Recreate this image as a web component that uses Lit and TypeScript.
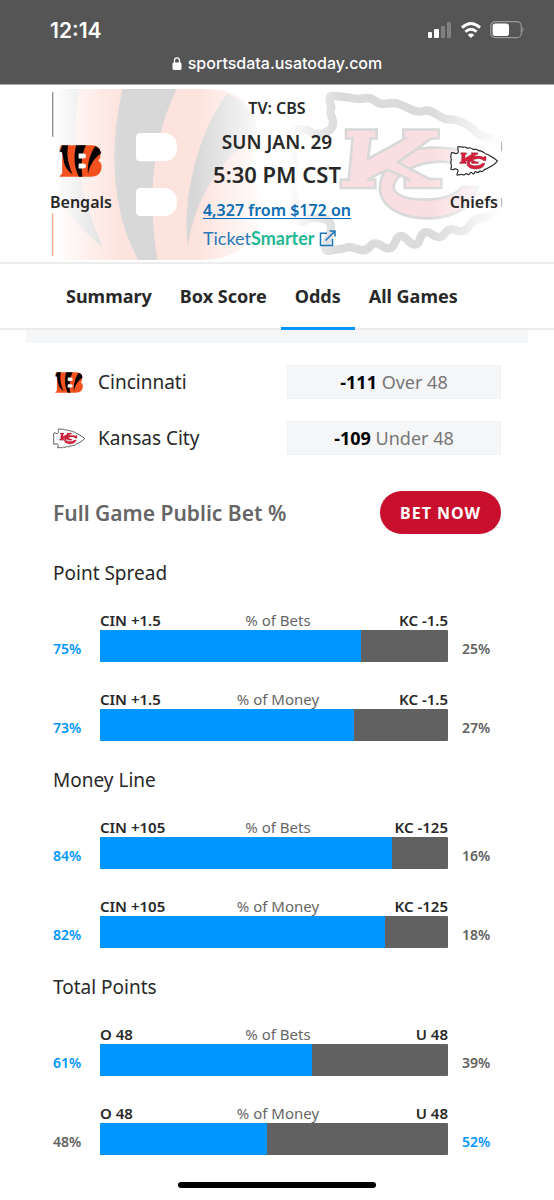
import { LitElement, html, svg, css } from "lit";
import { customElement, property } from "lit/decorators.js";

const bengalsArt = (orange: string, dark: string) => svg`
  <path fill=${orange} d="M0 12H500Q600 14 636 78Q664 142 642 212Q634 240 612 262Q652 290 664 336Q672 416 628 472Q580 524 480 525H-28L20 470V130Q0 90-26 96Z"/>
  <path fill=${dark} d="M20 12H118C98 120 92 260 188 487C120 430 70 380 52 300L26 150Q14 100-28 122C0 90 10 50 20 12Z"/>
  <path fill=${dark} d="M248 12H410C352 130 316 300 352 525H295C214 380 206 190 248 12Z"/>
  <path fill=${dark} d="M562 26Q612 48 636 82Q652 116 650 148C560 206 464 330 443 487C424 330 480 130 562 26Z"/>
  <path fill="#fff" d="M302 144H370Q411 146 411 187Q411 228 370 229H302Q288 229 288 215V158Q288 144 302 144Z"/>
  <path fill="#fff" d="M302 309H370Q411 311 411 352Q411 392 370 393H302Q288 393 288 379V323Q288 309 302 309Z"/>`;

const arrowheadArt = (base: string, fill: string, line: string, edge: string, width: number, edgeWidth: number) => svg`
  <path fill=${base} stroke=${line} stroke-width=${width} stroke-linejoin="round"
    d="M178 44Q178 30 196 33L240 38Q262 44 282 40T316 48T350 56T384 56T420 72T460 78T500 88T540 103T585 116T620 142T660 158L690 174L745 206L800 244L826 268L800 300L755 336L700 366L650 396Q612 398 598 422T560 436T524 446T486 448T450 462T414 466T376 470T338 484T300 484T262 492T222 490L175 498Q160 496 168 478L180 445Q190 408 166 404Q130 388 100 410L64 402L76 350L64 300L74 240L64 190L78 132L110 134Q145 156 172 140Q196 126 186 98Q178 84 184 66Z"/>
  <g fill=${fill} stroke=${edge} stroke-width=${edgeWidth} stroke-linejoin="miter">
    <path d="M612 194H640V262H602C576 226 500 222 440 242C388 262 362 296 374 318C402 352 520 352 562 320L576 306H622C612 360 560 398 480 400C400 402 335 370 330 315C328 240 400 190 480 188C530 186 570 192 600 206Z"/>
    <path d="M228 134H320V160H302L294 222L410 158H400V134H506V160H484L384 232L478 282H514V309H404V284H420L352 254L292 284H316V309H212V284H236L248 160H228Z"/>
  </g>`;

@customElement("team-logo")
class TeamLogo extends LitElement {
  @property() team = "bengals";
  static styles = css`
    :host { display: block; }
    svg { display: block; width: 100%; height: 100%; }
  `;
  render() {
    return this.team === "bengals"
      ? html`<svg viewBox="-32 8 704 521" role="img" aria-label="Bengals logo">${bengalsArt("#f4511e", "#000")}</svg>`
      : html`<svg viewBox="52 22 784 492" role="img" aria-label="Chiefs logo">${arrowheadArt("#fff", "#d81f3c", "#222", "#7c2530", 18, 6)}</svg>`;
  }
}

@customElement("bet-bar")
class BetBar extends LitElement {
  @property() left = "";
  @property() right = "";
  @property() label = "";
  @property({ type: Number }) share = 50;
  static styles = css`
    :host { display: grid; grid-template-columns: 47px 1fr 53px; }
    .labels { grid-column: 2; display: flex; justify-content: space-between; position: relative; line-height: 20px; font-size: 15px; color: #282828; font-weight: 600; }
    .kind { position: absolute; left: 0; right: 0; text-align: center; font-weight: 400; color: #666; padding-left: 8px; }
    .pct { grid-row: 2; display: flex; align-items: center; padding-top: 4px; font-size: 14px; font-weight: 600; color: #616161; }
    .pct.end { grid-column: 3; padding-left: 14px; }
    .pct.lead { color: #0096ff; }
    .bar { grid-column: 2; grid-row: 2; position: relative; height: 32px; background: #616161; border-radius: 1px; overflow: hidden; }
    .fill { height: 100%; background: #0096ff; }
  `;
  render() {
    const other = 100 - this.share;
    return html`
      <div class="labels"><span>${this.left}</span><span class="kind">${this.label}</span><span>${this.right}</span></div>
      <span class="pct ${this.share > other ? "lead" : ""}">${this.share}%</span>
      <div class="bar"><div class="fill" style="width:${this.share}%"></div></div>
      <span class="pct end ${other > this.share ? "lead" : ""}">${other}%</span>`;
  }
}

const groups = [
  { title: "Point Spread", left: "CIN +1.5", right: "KC -1.5", bets: 75, money: 73 },
  { title: "Money Line", left: "CIN +105", right: "KC -125", bets: 84, money: 82 },
  { title: "Total Points", left: "O 48", right: "U 48", bets: 61, money: 48 },
];
const odds = [
  { team: "bengals", city: "Cincinnati", price: "-111", line: "Over 48" },
  { team: "chiefs", city: "Kansas City", price: "-109", line: "Under 48" },
];
const tabs = ["Summary", "Box Score", "Odds", "All Games"];

@customElement("app-root")
class AppRoot extends LitElement {
  static styles = css`
    :host { display: block; background: #fff; color: #282828; font-family: "Noto Sans", "Open Sans", sans-serif; }
    * { box-sizing: border-box; }
    h1, h2, h3, p { margin: 0; }
    a { color: inherit; text-decoration: none; }
    svg { display: block; }

    .status { background: #555; color: #fff; font-family: Inter, "Liberation Sans", sans-serif; padding: 18px 30px 9px 50px; border-bottom: 1px solid #aaa; }
    .system { display: flex; justify-content: space-between; align-items: center; height: 24px; }
    .time { font-size: 21px; font-weight: 600; }
    .indicators { display: flex; align-items: center; gap: 9px; }
    .address { display: flex; justify-content: center; align-items: center; gap: 6px; height: 24px; margin: 9px 20px 0 0; font-size: 16px; font-weight: 500; }

    .hero { position: relative; border-bottom: 2px solid #ececec; padding: 13px 50px 12px; }
    .art { position: absolute; top: 0; width: 240px; height: 180px; }
    .art.away { left: 40px; }
    .art.home { right: 44px; }
    .match { position: relative; display: grid; grid-template-columns: 1fr auto 1fr; }
    .team { display: flex; flex-direction: column; align-items: center; justify-self: start; gap: 15px; padding-top: 47px; font-size: 16px; font-weight: 600; line-height: 20px; }
    .team.home { justify-self: end; padding-right: 6px; }
    .mark { width: 43px; height: 32px; }
    .mark.home { width: 48px; height: 32px; }
    .info { text-align: center; font-weight: 600; }
    .tv { font-size: 16px; line-height: 20px; }
    .date { font-size: 19px; line-height: 24px; margin-top: 12px; }
    .hour { font-size: 22px; line-height: 28px; margin-top: 6px; }
    .tickets { display: block; color: #0c6cb5; font-size: 16px; line-height: 20px; margin-top: 12px; text-decoration: underline; text-underline-offset: 2px; }
    .seller { display: flex; align-items: center; gap: 4px; margin-top: 6px; font-family: Lato, sans-serif; font-size: 18px; font-weight: 400; line-height: 24px; color: #2b78b8; }
    .seller b { color: #1fb794; font-weight: 700; }

    .tabs { display: flex; padding: 0 52px; border-bottom: 2px solid #ececec; }
    .tab { padding: 0 14px; line-height: 64px; font-size: 18px; font-weight: 700; }
    .tab.on { box-shadow: 0 2px #0096ff, inset 0 -1px #0096ff; }
    .strip { height: 13px; margin: 0 26px; background: #f5f6f8; }

    main { padding: 22px 53px 0; }
    .odds { display: grid; gap: 22px; }
    .row { display: grid; grid-template-columns: 32px 1fr 214px; align-items: center; column-gap: 13px; font-size: 18px; }
    .small { width: 32px; height: 21px; }
    .city { font-size: 19px; line-height: 24px; }
    .price { height: 34px; line-height: 34px; text-align: center; background: #f5f6f8; box-shadow: inset 0 0 0 1px #eff0f1; border-radius: 2px; color: #777; }
    .price b { color: #000; }
    .head { display: flex; justify-content: space-between; align-items: center; margin-top: 36px; }
    h2 { font-size: 21px; line-height: 28px; font-weight: 600; color: #666; }
    .bet { border: 0; border-radius: 22px; height: 43px; padding: 0 20px; background: #c8102e; color: #fff; font: 700 16px/24px "Noto Sans", sans-serif; letter-spacing: 1px; }
    section { margin-top: 27px; display: grid; }
    h3 { font-size: 19px; line-height: 24px; font-weight: 400; margin-bottom: 25px; }
    bet-bar + bet-bar { margin-top: 27px; }
    .grip { width: 198px; height: 6px; border-radius: 3px; background: #000; margin: 27px auto 0; }
    footer { padding-bottom: 11px; }
  `;

  render() {
    return html`
      <div class="status">
        <div class="system">
          <span class="time">12:14</span>
          <div class="indicators">
            <svg width="24" height="17" viewBox="0 0 24 17" fill="#fff"><rect y="10" width="4" height="6" rx="1"/><rect x="6" y="7" width="5" height="9" rx="1"/><g opacity=".25"><rect x="13" y="4" width="4" height="12" rx="1"/><rect x="19" width="4" height="16" rx="1"/></g></svg>
            <svg width="20" height="16" viewBox="0 0 20 16" fill="none" stroke="#fff" stroke-width="2.8"><path d="M1 5.6Q10-2.6 19 5.6M4.4 9.8Q10 4.800 15.6 9.800"/><path d="M10 16L6.8 12.9Q10 10.300 13.2 12.900Z" fill="#fff" stroke="none"/></svg>
            <svg width="34" height="18" viewBox="0 0 34 18"><rect x=".7" y=".7" width="30.600" height="16" rx="4.500" fill="none" stroke="#999" stroke-width="1.200"/><rect x="2.600" y="2.600" width="16.400" height="12.400" rx="2.800" fill="#fff"/><path d="M32.400 6Q34.600 8.700 32.400 11.500Z" fill="#999"/></svg>
          </div>
        </div>
        <div class="address">
          <svg width="10" height="13" viewBox="0 0 10 13"><rect x=".5" y="5.500" width="9" height="7.500" rx="1.400" fill="#fff"/><path d="M2.500 6V3.700Q2.500.8 5 .8T7.500 3.700V6" fill="none" stroke="#fff" stroke-width="1.300"/></svg>
          <span>sportsdata.usatoday.com</span>
        </div>
      </div>

      <header class="hero">
        <svg class="art away" viewBox="0 0 720 540" aria-hidden="true">
          <defs>
            <linearGradient id="fadeAway" gradientUnits="userSpaceOnUse" x1="38" x2="670" y1="0" y2="0">
              <stop offset="0" stop-color="#000"/><stop offset=".32" stop-color="#fff"/><stop offset=".68" stop-color="#fff"/><stop offset="1" stop-color="#111"/>
            </linearGradient>
            <mask id="maskAway"><rect x="38" width="682" height="540" fill="url(#fadeAway)"/></mask>
          </defs>
          <g mask="url(#maskAway)">${bengalsArt("#fde3dd", "#d8d8d8")}</g>
          <path d="M38 22V155" stroke="#8a8a8a" stroke-width="4"/><path d="M38 385V513" stroke="#faa78f" stroke-width="4"/>
        </svg>
        <svg class="art home" viewBox="0 0 720 540" aria-hidden="true">
          <defs>
            <linearGradient id="fadeHome" gradientUnits="userSpaceOnUse" x1="50" x2="690" y1="0" y2="0">
              <stop offset="0" stop-color="#000"/><stop offset=".24" stop-color="#fff"/><stop offset=".68" stop-color="#fff"/><stop offset="1" stop-color="#000"/>
            </linearGradient>
            <mask id="maskHome"><rect width="690" height="540" fill="url(#fadeHome)"/></mask>
          </defs>
          <g mask="url(#maskHome)">${arrowheadArt("none", "#fadfe2", "#dbdbdb", "#d9d9d9", 25, 8)}</g>
          <path d="M695 170V199M695 339V365" stroke="#aaa" stroke-width="3"/>
        </svg>
        <div class="match">
          <div class="team"><team-logo class="mark" team="bengals"></team-logo>Bengals</div>
          <div class="info">
            <p class="tv">TV: CBS</p>
            <p class="date">SUN JAN. 29</p>
            <p class="hour">5:30 PM CST</p>
            <a class="tickets" href="#tickets">4,327 from $172 on</a>
            <a class="seller" href="#tickets"><span>Ticket<b>Smarter</b></span>
              <svg width="17" height="17" viewBox="0 0 17 17" fill="none" stroke="#1b76ba" stroke-width="1.500"><path d="M8 3.200H1.500V15.500H13.500V9M10.500 1H16V6.500M16 1L6.500 10.500"/></svg>
            </a>
          </div>
          <div class="team home"><team-logo class="mark home" team="chiefs"></team-logo>Chiefs</div>
        </div>
      </header>

      <nav class="tabs">${tabs.map((t) => html`<a class="tab ${t === "Odds" ? "on" : ""}" href="#${t}">${t}</a>`)}</nav>
      <div class="strip"></div>

      <main>
        <div class="odds">
          ${odds.map((o) => html`<div class="row"><team-logo class="small" team=${o.team}></team-logo><span class="city">${o.city}</span><span class="price"><b>${o.price}</b> ${o.line}</span></div>`)}
        </div>
        <div class="head"><h2>Full Game Public Bet %</h2><button class="bet">BET NOW</button></div>
        ${groups.map((g) => html`<section>
          <h3>${g.title}</h3>
          <bet-bar left=${g.left} right=${g.right} label="% of Bets" .share=${g.bets}></bet-bar>
          <bet-bar left=${g.left} right=${g.right} label="% of Money" .share=${g.money}></bet-bar>
        </section>`)}
      </main>
      <footer><div class="grip"></div></footer>`;
  }
}
